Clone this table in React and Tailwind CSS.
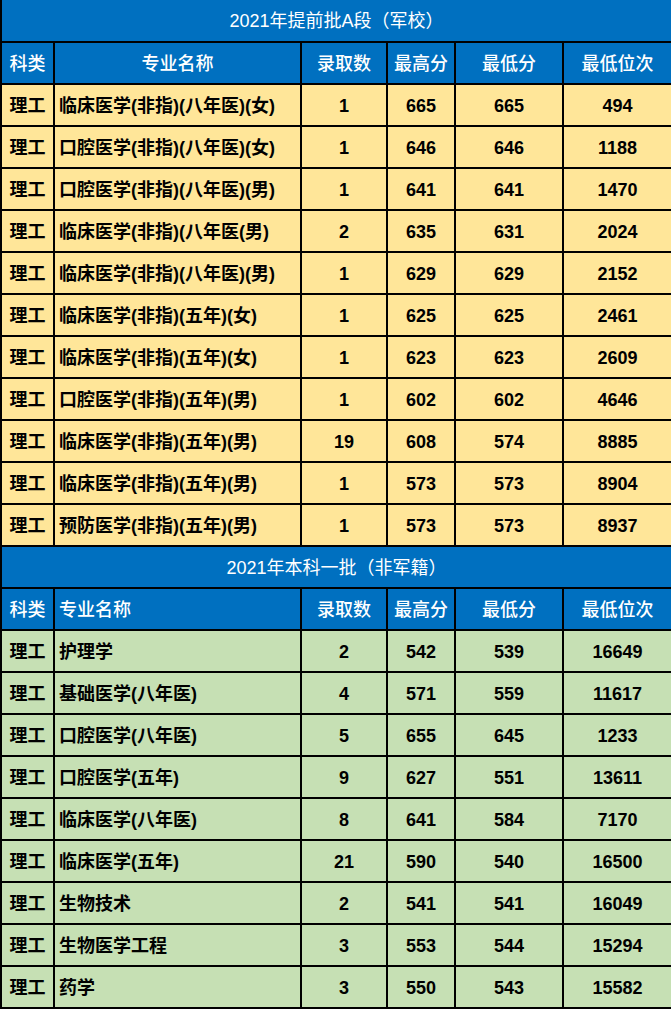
import React from "react";

const table1 = [
  ["理工", "临床医学(非指)(八年医)(女)", "1", "665", "665", "494"],
  ["理工", "口腔医学(非指)(八年医)(女)", "1", "646", "646", "1188"],
  ["理工", "口腔医学(非指)(八年医)(男)", "1", "641", "641", "1470"],
  ["理工", "临床医学(非指)(八年医(男)", "2", "635", "631", "2024"],
  ["理工", "临床医学(非指)(八年医)(男)", "1", "629", "629", "2152"],
  ["理工", "临床医学(非指)(五年)(女)", "1", "625", "625", "2461"],
  ["理工", "临床医学(非指)(五年)(女)", "1", "623", "623", "2609"],
  ["理工", "口腔医学(非指)(五年)(男)", "1", "602", "602", "4646"],
  ["理工", "临床医学(非指)(五年)(男)", "19", "608", "574", "8885"],
  ["理工", "临床医学(非指)(五年)(男)", "1", "573", "573", "8904"],
  ["理工", "预防医学(非指)(五年)(男)", "1", "573", "573", "8937"],
];

const table2 = [
  ["理工", "护理学", "2", "542", "539", "16649"],
  ["理工", "基础医学(八年医)", "4", "571", "559", "11617"],
  ["理工", "口腔医学(八年医)", "5", "655", "645", "1233"],
  ["理工", "口腔医学(五年)", "9", "627", "551", "13611"],
  ["理工", "临床医学(八年医)", "8", "641", "584", "7170"],
  ["理工", "临床医学(五年)", "21", "590", "540", "16500"],
  ["理工", "生物技术", "2", "541", "541", "16049"],
  ["理工", "生物医学工程", "3", "553", "544", "15294"],
  ["理工", "药学", "3", "550", "543", "15582"],
];

const headers = ["科类", "专业名称", "录取数", "最高分", "最低分", "最低位次"];

const Section = ({ title, rows, bg, headLeft }) => (
  <>
    <tr className="h-[42px] bg-[#0070c0]">
      <td colSpan={6} className="border-x-2 border-black text-center text-white text-[18px] pt-[2px]">
        {title}
      </td>
    </tr>
    <tr className="h-[42px] bg-[#0070c0]">
      {headers.map((h, i) => (
        <td
          key={h}
          className={`border-2 border-black text-white text-[18px] font-medium pt-[2px] ${
            i === 1 && headLeft ? "text-left pl-[4px]" : "text-center"
          }`}
        >
          {h}
        </td>
      ))}
    </tr>
    {rows.map((r, ri) => (
      <tr key={ri} className={`h-[42px] ${bg}`}>
        {r.map((c, i) => (
          <td
            key={i}
            className={`border-2 border-black text-black text-[18px] font-semibold pt-[2px] ${
              i === 1 ? "text-left pl-[4px]" : "text-center"
            }`}
          >
            {c}
          </td>
        ))}
      </tr>
    ))}
  </>
);

export default function App() {
  return (
    <div
      className="w-[671px] h-[1009px] overflow-hidden bg-white"
      style={{ fontFamily: '"Liberation Sans", "Noto Sans CJK SC", sans-serif' }}
    >
      <table className="table-fixed border-collapse w-[671px]">
        <colgroup>
          <col className="w-[53px]" />
          <col className="w-[247px]" />
          <col className="w-[86px]" />
          <col className="w-[68px]" />
          <col className="w-[108px]" />
          <col className="w-[109px]" />
        </colgroup>
        <tbody>
          <Section title="2021年提前批A段（军校）" rows={table1} bg="bg-[#ffe699]" />
          <Section title="2021年本科一批（非军籍）" rows={table2} bg="bg-[#c6e0b4]" headLeft />
        </tbody>
      </table>
    </div>
  );
}
